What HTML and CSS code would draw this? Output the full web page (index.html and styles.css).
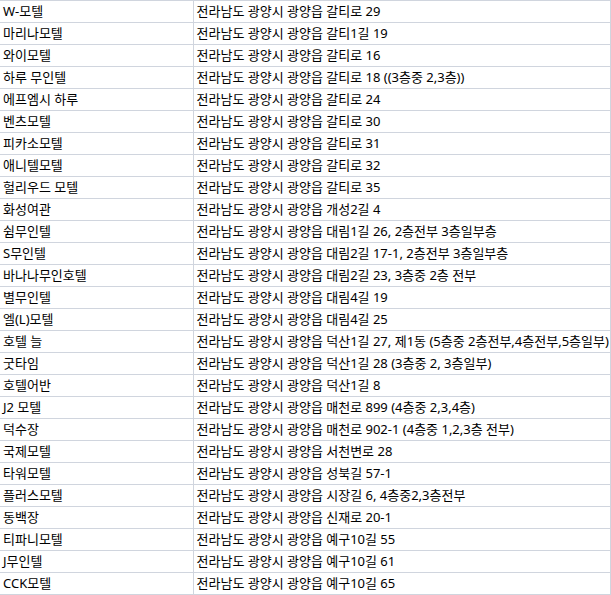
FILE: index.html
```html
<!DOCTYPE html>
<html lang="ko">
<head>
<meta charset="utf-8">
<title>광양 숙박업소 목록</title>
<link rel="stylesheet" href="styles.css">
</head>
<body>
<table class="sheet">
<colgroup><col class="c-name"><col class="c-addr"></colgroup>
<tbody>
<tr><td>W-모텔</td><td>전라남도 광양시 광양읍 갈티로 29</td></tr>
<tr><td>마리나모텔</td><td>전라남도 광양시 광양읍 갈티1길 19</td></tr>
<tr><td>와이모텔</td><td>전라남도 광양시 광양읍 갈티로 16</td></tr>
<tr><td>하루 무인텔</td><td>전라남도 광양시 광양읍 갈티로 18 ((3층중 2,3층))</td></tr>
<tr><td>에프엠시 하루</td><td>전라남도 광양시 광양읍 갈티로 24</td></tr>
<tr><td>벤츠모텔</td><td>전라남도 광양시 광양읍 갈티로 30</td></tr>
<tr><td>피카소모텔</td><td>전라남도 광양시 광양읍 갈티로 31</td></tr>
<tr><td>애니텔모텔</td><td>전라남도 광양시 광양읍 갈티로 32</td></tr>
<tr><td>헐리우드 모텔</td><td>전라남도 광양시 광양읍 갈티로 35</td></tr>
<tr><td>화성여관</td><td>전라남도 광양시 광양읍 개성2길 4</td></tr>
<tr><td>쉼무인텔</td><td>전라남도 광양시 광양읍 대림1길 26, 2층전부 3층일부층</td></tr>
<tr><td>S무인텔</td><td>전라남도 광양시 광양읍 대림2길 17-1, 2층전부 3층일부층</td></tr>
<tr><td>바나나무인호텔</td><td>전라남도 광양시 광양읍 대림2길 23, 3층중 2층 전부</td></tr>
<tr><td>별무인텔</td><td>전라남도 광양시 광양읍 대림4길 19</td></tr>
<tr><td>엘(L)모텔</td><td>전라남도 광양시 광양읍 대림4길 25</td></tr>
<tr><td>호텔 늘</td><td>전라남도 광양시 광양읍 덕산1길 27, 제1동 (5층중 2층전부,4층전부,5층일부)</td></tr>
<tr><td>굿타임</td><td>전라남도 광양시 광양읍 덕산1길 28 (3층중 2, 3층일부)</td></tr>
<tr><td>호텔어반</td><td>전라남도 광양시 광양읍 덕산1길 8</td></tr>
<tr><td>J2 모텔</td><td>전라남도 광양시 광양읍 매천로 899 (4층중 2,3,4층)</td></tr>
<tr><td>덕수장</td><td>전라남도 광양시 광양읍 매천로 902-1 (4층중 1,2,3층 전부)</td></tr>
<tr><td>국제모텔</td><td>전라남도 광양시 광양읍 서천변로 28</td></tr>
<tr><td>타워모텔</td><td>전라남도 광양시 광양읍 성북길 57-1</td></tr>
<tr><td>플러스모텔</td><td>전라남도 광양시 광양읍 시장길 6, 4층중2,3층전부</td></tr>
<tr><td>동백장</td><td>전라남도 광양시 광양읍 신재로 20-1</td></tr>
<tr><td>티파니모텔</td><td>전라남도 광양시 광양읍 예구10길 55</td></tr>
<tr><td>J무인텔</td><td>전라남도 광양시 광양읍 예구10길 61</td></tr>
<tr><td>CCK모텔</td><td>전라남도 광양시 광양읍 예구10길 65</td></tr>
</tbody>
</table>
</body>
</html>
```

FILE: styles.css
```css
html, body {
  margin: 0;
  padding: 0;
  background: #ffffff;
}

.sheet {
  border-collapse: collapse;
  table-layout: fixed;
  width: 610px;
  font-family: "Noto Sans", "Noto Sans CJK KR", sans-serif;
  font-size: 13px;
  color: #000000;
}

.c-name { width: 193px; }
.c-addr { width: 417px; }

.sheet td {
  border: 1px solid #d0d5de;
  height: 21px;
  padding: 0 0 0 3px;
  line-height: 21px;
  white-space: nowrap;
  overflow: hidden;
  vertical-align: middle;
}

.sheet td:first-child {
  border-left: none;
}
```
